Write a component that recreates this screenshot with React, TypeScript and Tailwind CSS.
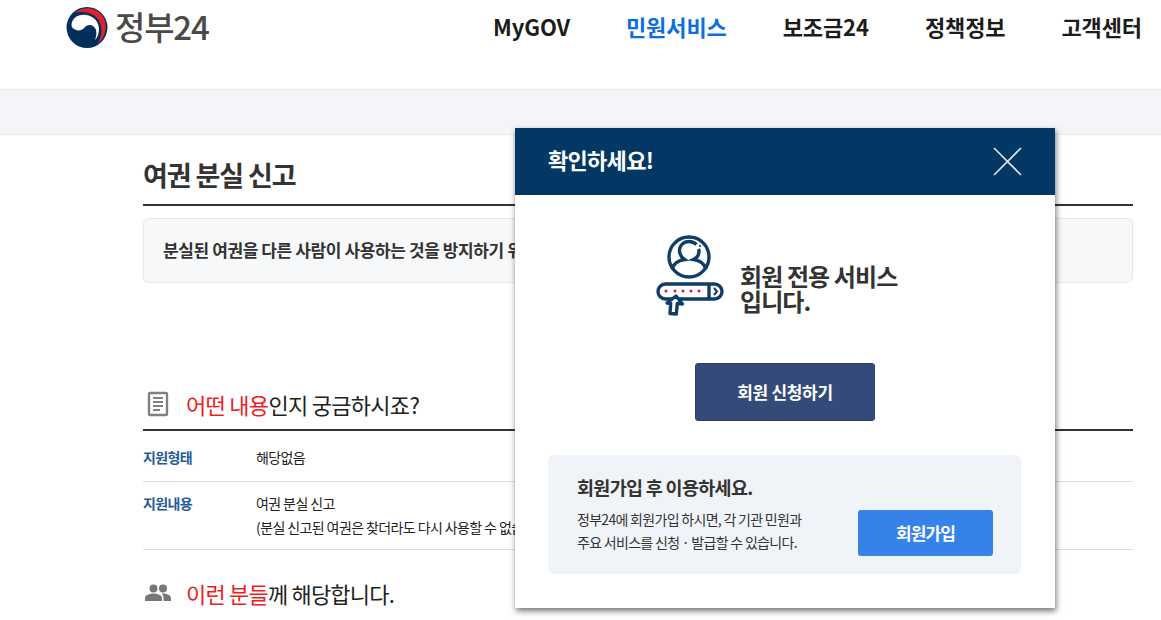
const nav = ['MyGOV', '민원서비스', '보조금24', '정책정보', '고객센터']

function Logo() {
  return (
    <svg width="42" height="41" viewBox="0 0 42 41">
      <circle cx="21" cy="20.500" r="20.500" fill="#02305a" />
      <path d="M5.500 18C6 11 12 7 20 8C28 9 33 15 33 22C33 27 31 31 29 33C31 28 31 22 28 20C25 17 21 18 19 20C17 23 13 24 10 23C7 22 5.500 20 5.500 18Z" fill="#fff" />
      <path d="M9 6C15 0 28 -1 36 8C42 16 41 29 31 38C37 28 37 18 31 11C25 5 15 4 9 6Z" fill="#e01f30" />
    </svg>
  )
}

function DocIcon() {
  return (
    <svg width="22" height="26" viewBox="0 0 22 26" fill="none" stroke="#808080" strokeWidth="2.400">
      <rect x="2" y="2" width="18" height="22" rx="1" />
      <path d="M6 7h10M6 11h10M6 15h10M6 19h7" strokeWidth="1.800" />
    </svg>
  )
}

function PeopleIcon() {
  return (
    <svg width="26" height="18" viewBox="0 0 26 18" fill="#777">
      <circle cx="8.500" cy="4.500" r="4" />
      <circle cx="18" cy="4.500" r="4" />
      <path d="M0 17v-3c0-3 5-4.500 8.500-4.500S17 11 17 14v3H0Z" />
      <path d="M18.500 17v-3.500c0-1.500-.7-2.800-1.900-3.800.5-.1 1-.2 1.400-.2 3.500 0 8 1.500 8 4.500v3h-7.500Z" />
    </svg>
  )
}

function MemberIcon() {
  return (
    <svg width="70" height="84" viewBox="0 0 70 84" fill="none" stroke="#0f3d66" strokeWidth="3.400">
      <circle cx="34" cy="22" r="20" />
      <path d="M41.500 9.500C39.500 7.500 37 6.500 34 6.500c-5.500 0-9.500 4-9.500 9 0 4 2 7 5 9-6 1-11 4-12.500 9.500" />
      <path d="M43.500 14c.5 1 .5 1.500 .5 2 0 4-2 7-5.500 8.500 6 1 11 4 12.500 9.500" />
      <circle cx="45" cy="11" r="0.800" fill="#0f3d66" strokeWidth="0.800" />
      <rect x="3" y="49" width="64" height="15" rx="7.500" />
      <path d="M54 49v15" />
      <path d="M59 53l3 3.500-3 3.500" strokeWidth="2" />
      <g fill="#e5173f" stroke="none">
        <circle cx="11" cy="56" r="1.500" />
        <circle cx="20" cy="56" r="1.500" />
        <circle cx="28" cy="56" r="1.500" />
        <circle cx="36" cy="56" r="1.500" />
        <circle cx="44" cy="56" r="1.500" />
      </g>
      <path d="M21 61l6.500 8-5.200-.5-1 10.500-6.300-.5.7-10-3.700-.5Z" fill="#fff" strokeLinejoin="round" />
    </svg>
  )
}

export default function App() {
  return (
    <div className="relative h-[620px] w-[1161px] overflow-hidden bg-white font-['Noto_Sans_CJK_KR',sans-serif] text-[#222]">
      <header className="flex h-[90px] items-start justify-between border-b border-[#e6e8ef] pl-[66px] pr-[19px]">
        <div className="flex items-start gap-[7px] pt-[7px]">
          <Logo />
          <span className="-mt-[2px] text-[33px] leading-[42px] font-medium tracking-[-1.200px] text-[#4a4a4a]">정부24</span>
        </div>
        <nav className="flex gap-[56px] pt-[9px]">
          {nav.map((item) => (
            <a key={item} className={item === '민원서비스' ? 'text-[22px] leading-[34px] font-bold tracking-[-0.1px] text-[#0f6fd6]' : 'text-[22px] leading-[34px] font-bold tracking-[-0.1px] text-[#1c1c1c]'}>
              {item}
            </a>
          ))}
        </nav>
      </header>
      <div className="h-[45px] border-b border-[#e6e8ef] bg-[#f4f5f9]" />

      <main className="ml-[143px] w-[990px]">
        <h1 className="border-b-2 border-[#333] pt-[20px] pb-[9px] text-[27px] leading-[40px] font-bold tracking-[-1.100px] text-[#333]">여권 분실 신고</h1>
        <div className="mt-[12px] h-[65px] rounded-[6px] border border-[#e6e8eb] bg-[#f7f8fa] px-[19px] text-[17px] leading-[61px] font-bold tracking-[-0.4px] whitespace-nowrap text-[#333]">
          분실된 여권을 다른 사람이 사용하는 것을 방지하기 위
        </div>

        <div className="mt-[103px] flex items-center gap-[17px] border-b-2 border-[#333] pb-[7px] pl-[4px]">
          <DocIcon />
          <h2 className="text-[22px] leading-[36px] tracking-[-0.7px]">
            <span className="text-[#ee1c25]">어떤 내용</span>인지 궁금하시죠?
          </h2>
        </div>
        <div className="flex h-[51px] items-center border-b border-[#ddd] pt-[2px] text-[14px] tracking-[-0.6px]">
          <span className="w-[113px] font-bold text-[#245a96]">지원형태</span>
          <span>해당없음</span>
        </div>
        <div className="flex h-[68px] items-start border-b border-[#ddd] pt-[9px] text-[14px] leading-[24px] tracking-[-0.6px]">
          <span className="w-[113px] shrink-0 font-bold text-[#245a96]">지원내용</span>
          <p className="whitespace-nowrap">여권 분실 신고<br />(분실 신고된 여권은 찾더라도 다시 사용할 수 없습니다)</p>
        </div>
        <div className="mt-[25px] flex items-center gap-[15px] pl-[2px]">
          <PeopleIcon />
          <h2 className="text-[22px] leading-[36px] tracking-[-0.8px]">
            <span className="text-[#ee1c25]">이런 분들</span>께 해당합니다.
          </h2>
        </div>
      </main>

      <div className="absolute top-[128px] left-[515px] w-[540px] bg-white shadow-[1px_3px_6px_rgba(0,0,0,0.55)]">
        <div className="flex h-[67px] items-center justify-between bg-[#033764] px-[33px]">
          <span className="pb-[4px] text-[22px] font-bold tracking-[-0.7px] text-white">확인하세요!</span>
          <svg width="29" height="29" viewBox="0 0 29 29" stroke="#dfe5ea" strokeWidth="1.600">
            <path d="M1 1l27 27M28 1L1 28" />
          </svg>
        </div>
        <div className="flex h-[413px] flex-col items-center px-[33px]">
          <div className="mt-[40px] flex w-[260px] items-end gap-[15px]">
            <MemberIcon />
            <p className="pb-[6px] text-[24px] leading-[25px] font-bold tracking-[-0.9px] whitespace-nowrap text-[#333]">회원 전용 서비스<br />입니다.</p>
          </div>
          <button className="mt-[44px] h-[58px] w-[180px] rounded-[3px] border border-[#2a4169] bg-[#344b79] text-[17px] font-bold tracking-[-0.3px] text-white">회원 신청하기</button>
          <div className="mt-[34px] flex h-[119px] w-[473px] items-start justify-between self-start rounded-[6px] bg-[#f0f4f8] pt-[15px] pr-[28px] pl-[29px]">
            <div>
              <h3 className="text-[18.500px] leading-[34px] font-bold tracking-[-0.7px] text-[#333]">회원가입 후 이용하세요.</h3>
              <p className="mt-[4px] text-[14px] leading-[23px] tracking-[-0.7px] text-[#333]">정부24에 회원가입 하시면, 각 기관 민원과<br />주요 서비스를 신청 · 발급할 수 있습니다.</p>
            </div>
            <button className="mt-[40px] h-[46px] w-[135px] rounded-[3px] bg-[#3583e8] text-[17px] font-bold tracking-[-0.9px] text-white">회원가입</button>
          </div>
        </div>
      </div>
    </div>
  )
}
